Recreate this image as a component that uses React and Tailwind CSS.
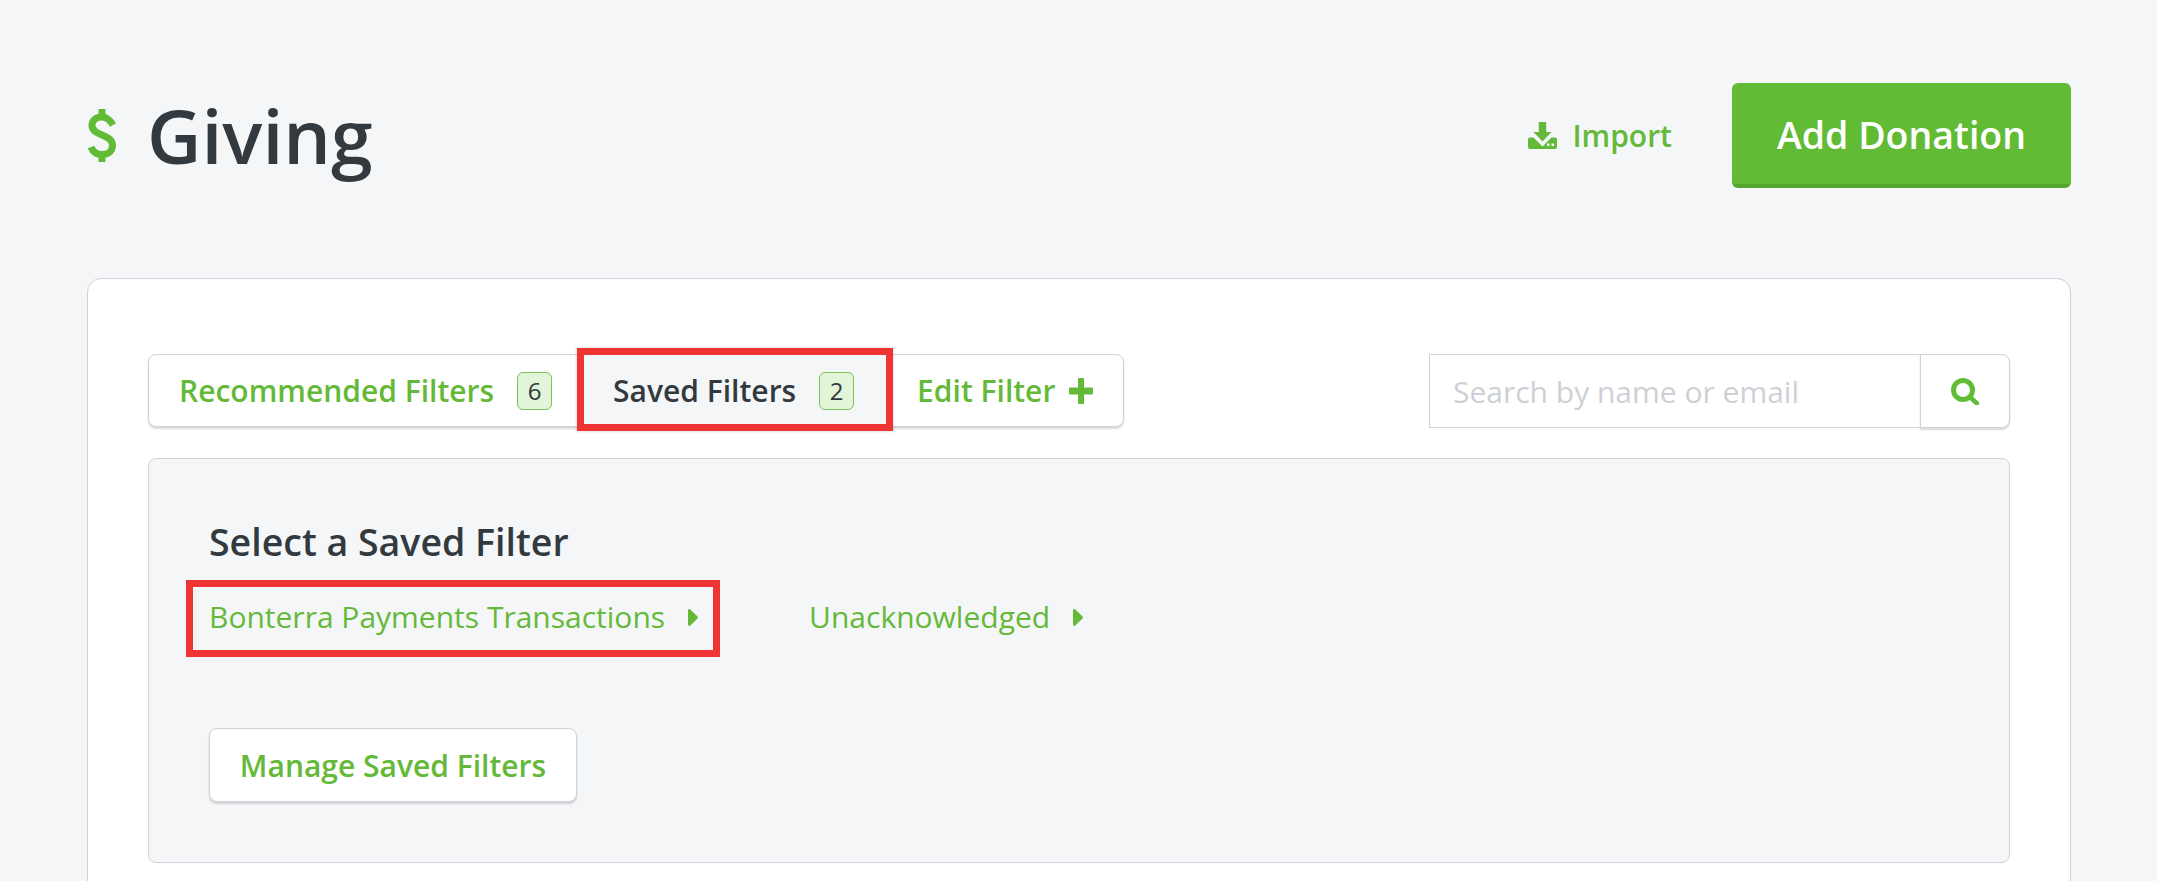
const FONT = "font-['Open_Sans',sans-serif]";

function DollarIcon() {
  return (
    <svg viewBox="0 0 28 53" className="h-[53px] w-[28px]" fill="none" stroke="currentColor" strokeWidth="7">
      <path d="M14 0v9M14 44v9" />
      <path d="M25 16C22 11 18 8 14 8C8 8 4 11.500 4 16.500C4 22 9 24 14 26C20 28.500 24.500 30.500 24.500 36.500C24.500 42 20 45.500 14 45.500C9 45.500 5 43 3 38" />
    </svg>
  );
}

function ImportIcon() {
  return (
    <svg viewBox="0 0 29 27" className="h-[27px] w-[29px]" fill="currentColor">
      <path d="M2 15.500h3.500l9 9 9-9H27a2 2 0 0 1 2 2V25a2 2 0 0 1-2 2H2a2 2 0 0 1-2-2v-7.500a2 2 0 0 1 2-2z" />
      <path d="M10.800 0h7.400v10h5.300l-9 9.500-9-9.500h5.300z" />
      <rect x="19" y="21.500" width="2.500" height="2.500" fill="#f4f6f8" />
      <rect x="23.500" y="21.500" width="2.500" height="2.500" fill="#f4f6f8" />
    </svg>
  );
}

function PlusIcon() {
  return (
    <svg viewBox="0 0 24 26" className="ml-[14px] h-[26px] w-[24px]" fill="currentColor">
      <path d="M9 1a1 1 0 0 1 1-1h4a1 1 0 0 1 1 1v8.500h8a1 1 0 0 1 1 1v5a1 1 0 0 1-1 1h-8V25a1 1 0 0 1-1 1h-4a1 1 0 0 1-1-1v-8.500H1a1 1 0 0 1-1-1v-5a1 1 0 0 1 1-1h8z" />
    </svg>
  );
}

function SearchIcon() {
  return (
    <svg viewBox="0 0 28 27" className="h-[27px] w-[28px]" fill="none" stroke="currentColor">
      <circle cx="12" cy="12" r="9.500" strokeWidth="5" />
      <path d="M19 19l7 6.500" strokeWidth="4.500" strokeLinecap="round" />
    </svg>
  );
}

function CaretIcon() {
  return (
    <svg viewBox="0 0 10 17" className="ml-[23px] h-[17px] w-[10px]" fill="currentColor">
      <path d="M0 1.500C0 .2 1.300-.4 2.300.5l7 6.700c.7.700.7 1.900 0 2.600l-7 6.700C1.300 17.400 0 16.800 0 15.500z" />
    </svg>
  );
}

function Badge({ children }) {
  return (
    <span className="ml-[23px] flex h-[38px] w-[35px] items-center justify-center rounded-[6px] border border-[#7cc35a] bg-[#e2f5d8] text-[24px] font-normal text-[#2f373d]">
      {children}
    </span>
  );
}

function FilterLink({ label, highlighted }) {
  return (
    <a className="relative flex items-center text-[30px] leading-[40px] text-[#64b938]">
      {label}
      <CaretIcon />
      {highlighted && (
        <span className="absolute top-[-17px] bottom-[-20px] left-[-23px] right-[-22px] border-[7px] border-[#ef3434]" />
      )}
    </a>
  );
}

export default function App() {
  return (
    <div className={`${FONT} h-[881px] overflow-hidden bg-[#f4f6f8] pl-[87px] pr-[86px] pt-[83px]`}>
      <header className="flex h-[105px] items-center justify-between">
        <div className="flex items-center">
          <span className="ml-[1px] text-[#62bb35]"><DollarIcon /></span>
          <h1 className="ml-[31px] text-[75px] font-semibold leading-none text-[#323a40]">Giving</h1>
        </div>
        <div className="flex items-center">
          <a className="flex items-center text-[30px] font-semibold text-[#64b938]">
            <span className="mr-[15px]"><ImportIcon /></span>
            Import
          </a>
          <button className="ml-[60px] h-[105px] w-[339px] rounded-[6px] border-b-[4px] border-[#55a52d] bg-[#62bb35] pt-[4px] text-[37.500px] font-semibold text-white">
            Add Donation
          </button>
        </div>
      </header>

      <main className="mt-[90px] rounded-[14px] border border-[#ced2d7] bg-white px-[60px] pb-[60px] pt-[75px]">
        <div className="flex items-start justify-between">
          <div className="flex h-[73px] rounded-[8px] border border-[#ced2d7] bg-white text-[30px] font-semibold shadow-[0_2px_2px_rgba(0,0,0,0.15)]">
            <button className="flex items-center pl-[30px] pr-[31px] text-[#64b938]">
              Recommended Filters
              <Badge>6</Badge>
            </button>
            <button className="relative flex w-[304px] items-center bg-[#f4f6f8] pl-[30px] font-semibold text-[#323a40]">
              Saved Filters
              <Badge>2</Badge>
              <span className="absolute top-[-7px] bottom-[-5px] left-[-6px] right-[-6px] border-[7px] border-[#ef3434] shadow-[0_0_3px_rgba(0,0,0,0.2)]" />
            </button>
            <button className="flex items-center pl-[30px] pr-[30px] text-[#64b938]">
              Edit Filter
              <PlusIcon />
            </button>
          </div>
          <div className="flex h-[74px]">
            <input
              placeholder="Search by name or email"
              className="h-full w-[492px] border border-[#ced2d7] bg-white px-[23px] text-[30px] outline-none placeholder:text-[#cdd1d6]"
            />
            <button className="ml-[-1px] flex h-full w-[90px] items-center justify-center rounded-r-[8px] border border-[#ced2d7] bg-white text-[#62bb35] shadow-[0_2px_2px_rgba(0,0,0,0.15)]">
              <SearchIcon />
            </button>
          </div>
        </div>

        <section className="mt-[30px] h-[405px] rounded-[8px] border border-[#ced2d7] bg-[#f4f6f8] px-[60px] pt-[58px]">
          <h2 className="text-[37.500px] font-semibold leading-[50px] text-[#323a40]">Select a Saved Filter</h2>
          <div className="mt-[30px] flex gap-[111px]">
            <FilterLink label="Bonterra Payments Transactions" highlighted />
            <FilterLink label="Unacknowledged" />
          </div>
          <button className="mt-[91px] h-[74px] w-[368px] rounded-[8px] border border-[#ced2d7] bg-white text-[30px] font-semibold text-[#64b938] shadow-[0_2px_2px_rgba(0,0,0,0.15)]">
            Manage Saved Filters
          </button>
        </section>
      </main>
    </div>
  );
}
